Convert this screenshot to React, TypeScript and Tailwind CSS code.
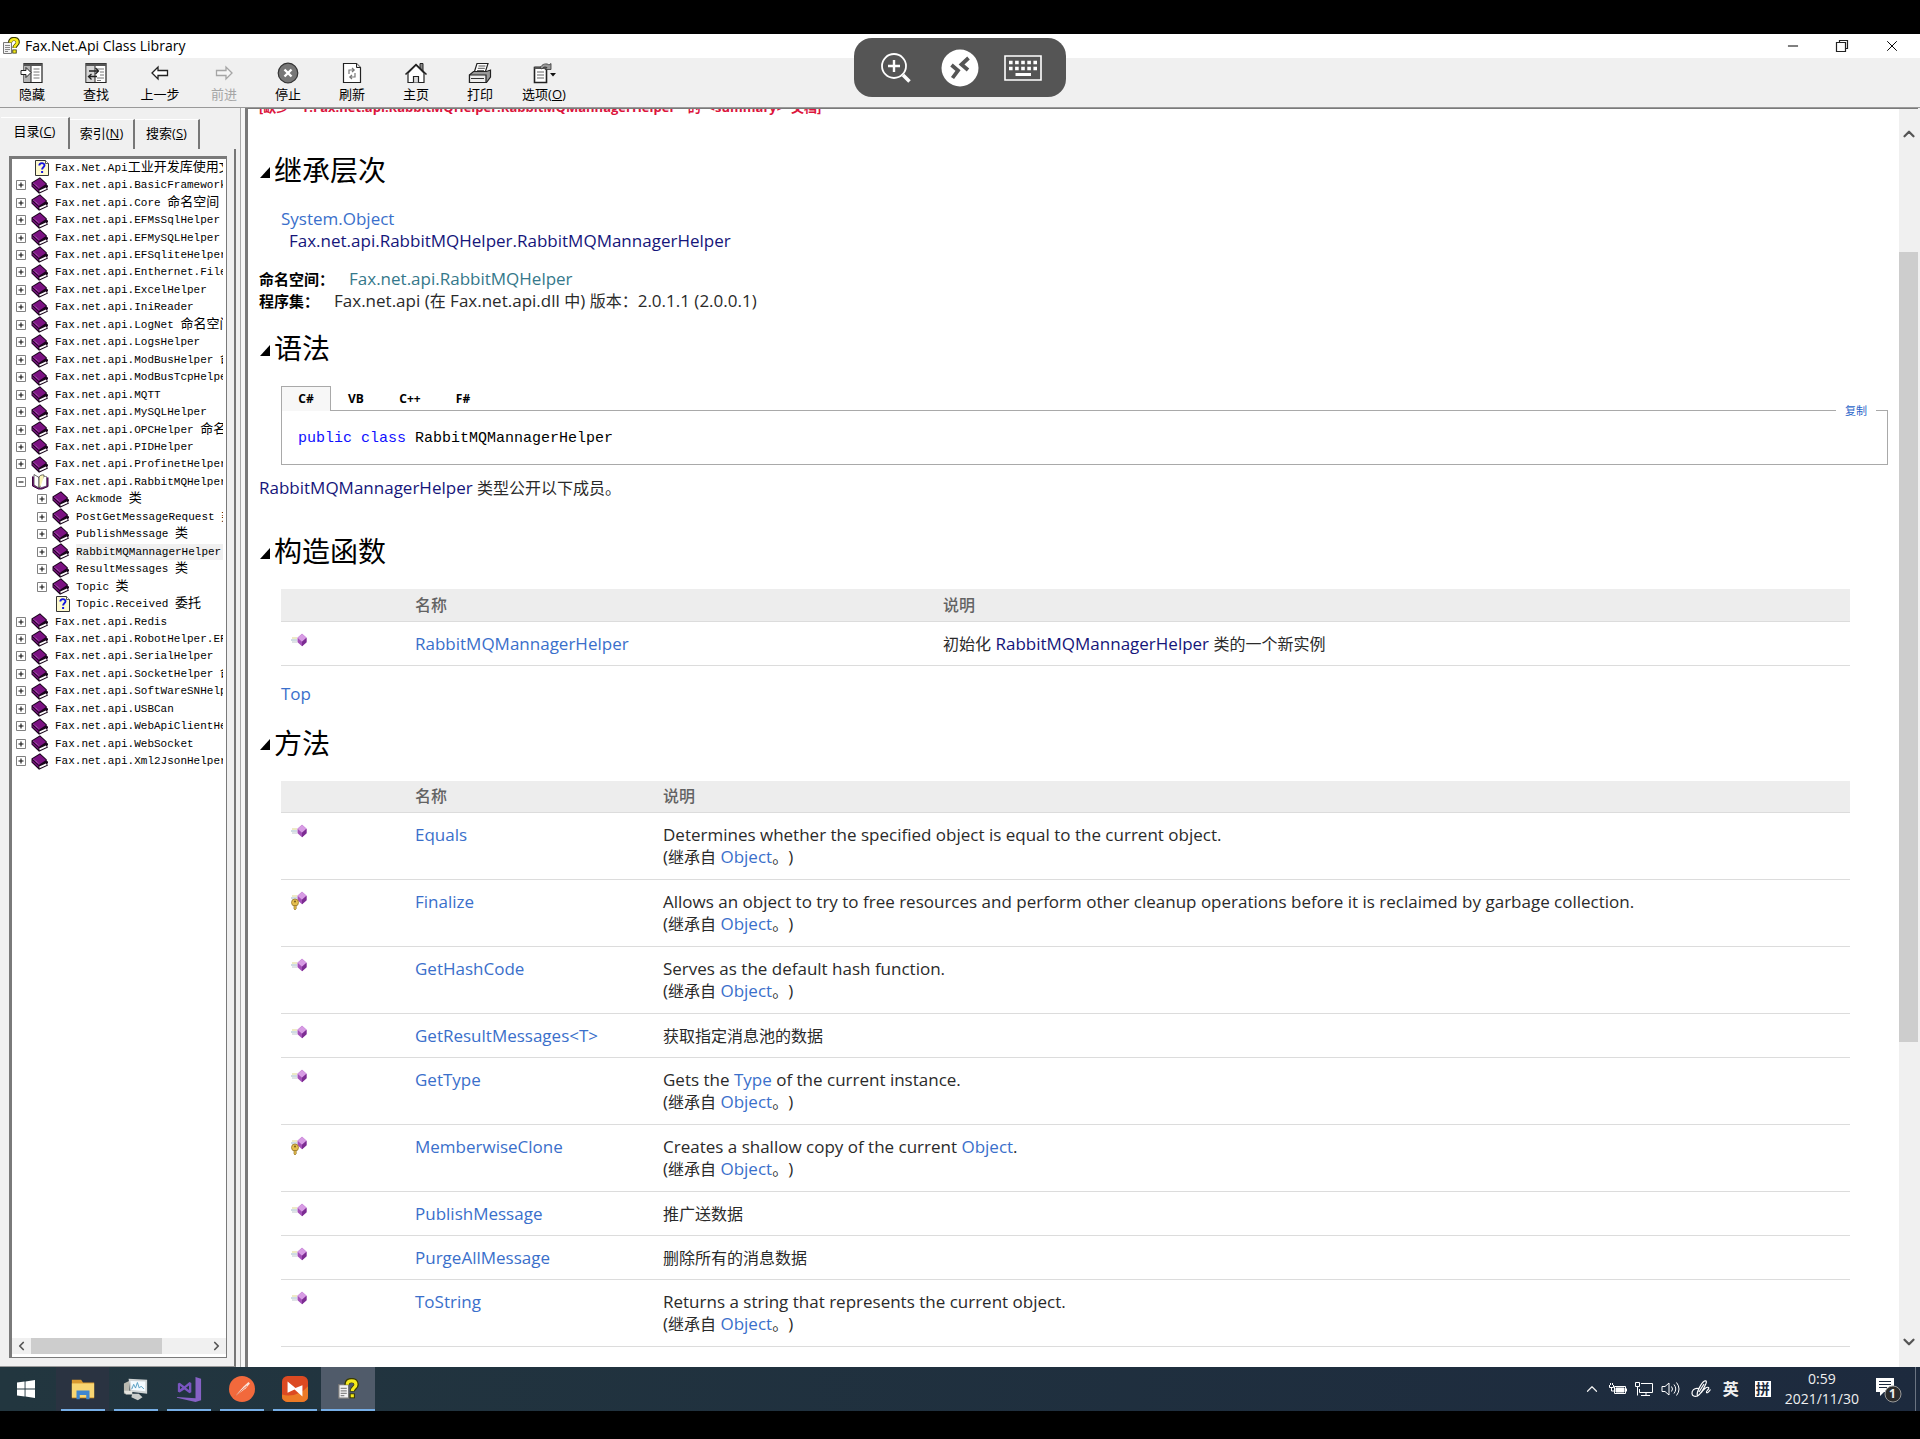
import React from "react";
import { ChevronUp, ChevronDown, ChevronLeft, ChevronRight, Minus, X } from "lucide-react";

const UI = "font-['Open_Sans','Noto_Sans_CJK_SC',sans-serif]";

type TreeItem = { label: string; kind: "book" | "open" | "page"; child?: boolean; selected?: boolean };

const tree: TreeItem[] = [
  { label: "Fax.Net.Api工业开发库使用文档", kind: "page" },
  { label: "Fax.net.api.BasicFramework", kind: "book" },
  { label: "Fax.net.api.Core 命名空间", kind: "book" },
  { label: "Fax.net.api.EFMsSqlHelper", kind: "book" },
  { label: "Fax.net.api.EFMySQLHelper", kind: "book" },
  { label: "Fax.net.api.EFSqliteHelper", kind: "book" },
  { label: "Fax.net.api.Enthernet.File", kind: "book" },
  { label: "Fax.net.api.ExcelHelper", kind: "book" },
  { label: "Fax.net.api.IniReader", kind: "book" },
  { label: "Fax.net.api.LogNet 命名空间", kind: "book" },
  { label: "Fax.net.api.LogsHelper", kind: "book" },
  { label: "Fax.net.api.ModBusHelper 命名空间", kind: "book" },
  { label: "Fax.net.api.ModBusTcpHelper", kind: "book" },
  { label: "Fax.net.api.MQTT", kind: "book" },
  { label: "Fax.net.api.MySQLHelper", kind: "book" },
  { label: "Fax.net.api.OPCHelper 命名空间", kind: "book" },
  { label: "Fax.net.api.PIDHelper", kind: "book" },
  { label: "Fax.net.api.ProfinetHelper", kind: "book" },
  { label: "Fax.net.api.RabbitMQHelper", kind: "open" },
  { label: "Ackmode 类", kind: "book", child: true },
  { label: "PostGetMessageRequest 类", kind: "book", child: true },
  { label: "PublishMessage 类", kind: "book", child: true },
  { label: "RabbitMQMannagerHelper", kind: "book", child: true, selected: true },
  { label: "ResultMessages 类", kind: "book", child: true },
  { label: "Topic 类", kind: "book", child: true },
  { label: "Topic.Received 委托", kind: "page", child: true },
  { label: "Fax.net.api.Redis", kind: "book" },
  { label: "Fax.net.api.RobotHelper.EF", kind: "book" },
  { label: "Fax.net.api.SerialHelper", kind: "book" },
  { label: "Fax.net.api.SocketHelper 命名空间", kind: "book" },
  { label: "Fax.net.api.SoftWareSNHelper", kind: "book" },
  { label: "Fax.net.api.USBCan", kind: "book" },
  { label: "Fax.net.api.WebApiClientHelper", kind: "book" },
  { label: "Fax.net.api.WebSocket", kind: "book" },
  { label: "Fax.net.api.Xml2JsonHelper", kind: "book" },
];

const Link = ({ children }: { children: React.ReactNode }) => (
  <a href="#" className="text-[#3a6fcb]">{children}</a>
);

const Cn = ({ children }: { children: React.ReactNode }) => (
  <span className="text-base leading-[22px]">{children}</span>
);

const Inherited = () => (
  <div>(<Cn>继承自</Cn> <Link>Object</Link><Cn>。</Cn>)</div>
);

const methods: { name: string; guarded?: boolean; desc: React.ReactNode; inherited?: boolean }[] = [
  { name: "Equals", desc: "Determines whether the specified object is equal to the current object.", inherited: true },
  {
    name: "Finalize",
    guarded: true,
    desc: "Allows an object to try to free resources and perform other cleanup operations before it is reclaimed by garbage collection.",
    inherited: true,
  },
  { name: "GetHashCode", desc: "Serves as the default hash function.", inherited: true },
  { name: "GetResultMessages<T>", desc: <Cn>获取指定消息池的数据</Cn> },
  { name: "GetType", desc: <>Gets the <Link>Type</Link> of the current instance.</>, inherited: true },
  { name: "MemberwiseClone", guarded: true, desc: <>Creates a shallow copy of the current <Link>Object</Link>.</>, inherited: true },
  { name: "PublishMessage", desc: <Cn>推广送数据</Cn> },
  { name: "PurgeAllMessage", desc: <Cn>删除所有的消息数据</Cn> },
  { name: "ToString", desc: "Returns a string that represents the current object.", inherited: true },
];

/* ---------- icons ---------- */

const HelpIcon = ({ className }: { className?: string }) => (
  <svg viewBox="0 0 18 18" className={className}>
    <path d="M1.500 5.500h8v11h-8z" fill="#f2f2f2" stroke="#777" />
    <path d="M3 8.500h5M3 10.500h5M3 12.500h5M3 14.500h3" stroke="#888" />
    <path d="M8 5.500C8 2.500 10 2 12 2s3.800 1 3.800 3.300c0 2.700-3.300 2.700-3.300 5.700" fill="none" stroke="#3b3b00" strokeWidth="4.200" />
    <path d="M10.300 12.600h4.400v4h-4.400z" fill="#3b3b00" />
    <path d="M8.400 5.500C8.400 3 10 2.300 12 2.300s3.500 1 3.500 3c0 2.600-3 2.600-3 5.400" fill="none" stroke="#f5ea1c" strokeWidth="2.600" />
    <path d="M11.200 13.300h2.600v2.500h-2.600z" fill="#f5ea1c" />
  </svg>
);

const BookIcon = () => (
  <svg viewBox="0 0 18 17" className="h-[17px] w-[18px] shrink-0">
    <path d="M.5 5.500 9 .3l6.800 6.200v1.400l1.200.6v1.800l-1 .4 1 1.700-9 4.300L.5 9.500z" fill="#1a061c" />
    <path d="m8.600 15.200 7.200-3.300-.9-1.500-6.600 3.200z" fill="#fff" />
    <path d="m1.500 5.900 7.400-4.500 6.100 5.500-7.300 5.200z" fill="#7b1282" />
    <path d="m2.500 6.300 5.700 4.600" stroke="#c98acd" strokeWidth=".8" strokeDasharray="1 .7" />
    <path d="m1.300 7.300 6.200 5.500v1.600L1.300 9z" fill="#7b1282" />
  </svg>
);

const OpenBookIcon = () => (
  <svg viewBox="0 0 18 17" className="h-[17px] w-[18px] shrink-0">
    <path d="M1.500 3.500V13l6 3h3.500l6-2.500v-9" fill="#7b1282" stroke="#3a0a3d" />
    <path d="M3 1.500 8 4.500v10.500l-5-3z" fill="#fff" stroke="#444" strokeWidth=".8" />
    <path d="M8 4.500c.5-2 2.500-3 5-2.500v10.500c-2.500 0-4 .5-5 2.500z" fill="#fbf6b8" stroke="#444" strokeWidth=".8" />
    <path d="M13 3.500h2.500V13L9 15" fill="#fff" stroke="#444" strokeWidth=".6" />
  </svg>
);

const PageIcon = () => (
  <svg viewBox="0 0 14 16" className="h-4 w-[14px] shrink-0">
    <path d="M.5.5h10l3 3v12H.5z" fill="#fdf9cf" stroke="#333" />
    <path d="M10.500.5v3h3" fill="#fff" stroke="#333" strokeWidth=".8" />
    <path d="M4.300 5.600c0-3.200 5.200-3.200 5.200-.3 0 1.900-2.400 1.900-2.400 4.200" fill="none" stroke="#1414e0" strokeWidth="1.900" />
    <path d="M6.100 11h2v2h-2z" fill="#1414e0" />
  </svg>
);

const ExpandBox = ({ open }: { open: boolean }) => (
  <svg viewBox="0 0 10 10" className="h-[10px] w-[10px] shrink-0">
    <path d="M.5.5h9v9h-9z" fill="#fff" stroke="#808080" />
    <path d={open ? "M2.500 5h5" : "M2.500 5h5M5 2.500v5"} stroke="#111" strokeWidth="1.100" />
  </svg>
);

const MethodIcon = ({ guarded }: { guarded?: boolean }) => (
  <svg viewBox="0 0 20 22" className="ml-2 h-[22px] w-5">
    <path d="M3 5h5" stroke="#dcd78c" />
    <path d="M2 7h6" stroke="#9fb8c8" />
    <path d="M3 9h5" stroke="#c0c8ce" />
    <path d="m13 .8 4.500 4v4.500l-4.500 4-4.500-4V4.800z" fill="#a34fb8" />
    <path d="m13 .8 4.500 4-4.500 4-4.500-4z" fill="#d79be4" />
    <path d="m17.500 4.800-4.500 4v4.500l4.500-4z" fill="#7c2d92" />
    {guarded && (
      <g>
        <circle cx="6" cy="11.500" r="3.500" fill="#e5bf4d" stroke="#98762a" strokeWidth=".8" />
        <path d="M5 14.500h2.200v3.300L6 19l-1-1z" fill="#e5bf4d" stroke="#98762a" strokeWidth=".7" />
        <circle cx="6" cy="10.500" r="1" fill="#7b5c18" />
      </g>
    )}
  </svg>
);

const toolbar: { label: React.ReactNode; key: string; disabled?: boolean; icon: React.ReactNode }[] = [
  {
    key: "hide",
    label: "隐藏",
    icon: (
      <>
        <path d="M4 1.500h18v19H4z" fill="#fff" stroke="#222" strokeWidth="1.200" />
        <path d="M4 1.500h18v2.500H4z" fill="#555" />
        <path d="M4 4h7v16H4z" fill="#b5b5b5" />
        <path d="M11 4v16.500" stroke="#222" />
        <path d="M13.500 7h6M13.500 10h6M13.500 13h6M13.500 16h6" stroke="#777" />
        <path d="M1 8.500h5v-3l5 5-5 5v-3H1z" fill="#fff" stroke="#222" />
      </>
    ),
  },
  {
    key: "find",
    label: "查找",
    icon: (
      <>
        <path d="M2 1.500h20v19H2z" fill="#fff" stroke="#222" strokeWidth="1.200" />
        <path d="M2 1.500h20v2.500H2z" fill="#555" />
        <path d="M2.600 4H11v16H2.600z" fill="#d5d5d5" />
        <path d="M11 4v16" stroke="#222" />
        <path d="M13 7h7M16 10h4M16 13h4M13 16h7M13 18.500h4" stroke="#777" />
        <path d="M5 9h9M11.500 6l3 3-3 3M13 14.500H5M7.500 12l-3 2.500 3 3" stroke="#222" strokeWidth="1.300" fill="none" />
      </>
    ),
  },
  {
    key: "back",
    label: "上一步",
    icon: <path d="M4 11l6-6v3.500h9.500v5H10V17z" fill="#fff" stroke="#222" strokeWidth="1.300" />,
  },
  {
    key: "forward",
    label: "前进",
    disabled: true,
    icon: <path d="M20 11l-6-6v3.500H4.500v5H14V17z" fill="#f5f5f5" stroke="#a5a5a5" strokeWidth="1.300" />,
  },
  {
    key: "stop",
    label: "停止",
    icon: (
      <>
        <circle cx="12" cy="11" r="9.800" fill="#777" stroke="#333" strokeWidth="1.200" />
        <path d="m8.500 7.500 7 7m0-7-7 7" stroke="#fff" strokeWidth="2.400" />
      </>
    ),
  },
  {
    key: "refresh",
    label: "刷新",
    icon: (
      <>
        <path d="M3.500 1.500h13l4 4v15h-17z" fill="#fff" stroke="#222" strokeWidth="1.200" />
        <path d="M16.500 1.500v4h4" fill="#ddd" stroke="#222" />
        <path d="M9 12V8h5M12 6l2.200 2L12 10M15 11v4h-5M12 13l-2.200 2 2.200 2" stroke="#777" strokeWidth="1.200" fill="none" />
      </>
    ),
  },
  {
    key: "home",
    label: "主页",
    icon: (
      <>
        <path d="M16 7V1.500h3V10" fill="#888" stroke="#222" />
        <path d="M4 11v9.500h16V11l-8-8z" fill="#fff" stroke="#222" strokeWidth="1.200" />
        <path d="m1.500 12.500 10.500-10 10.500 10" fill="none" stroke="#222" strokeWidth="1.600" />
        <path d="M9.500 20.500v-6h5v6" fill="#ddd" stroke="#222" strokeWidth="1.200" />
      </>
    ),
  },
  {
    key: "print",
    label: "打印",
    icon: (
      <>
        <path d="M6 11 9 1.500h11L17 11z" fill="#fff" stroke="#222" strokeWidth="1.200" />
        <path d="M10.500 4h7M9.800 6.300h7M9 8.600h7" stroke="#555" />
        <path d="m1.500 13 4-3.500h13l4-1.500v7l-4 5.500h-17z" fill="#999" stroke="#222" strokeWidth="1.200" />
        <path d="M1.500 13h16.500v7.500H1.500z" fill="#eee" stroke="#222" strokeWidth="1.200" />
        <path d="M3 16.500h13" stroke="#333" />
      </>
    ),
  },
  {
    key: "options",
    label: <>选项(<u>O</u>)</>,
    icon: (
      <>
        <path d="M2.500 5.500h12v15h-12z" fill="#fff" stroke="#222" strokeWidth="1.600" />
        <path d="M2.500 4.500h12v2.500h-12z" fill="#555" />
        <path d="M5 10h7M5 13h7M5 16h7" stroke="#666" strokeWidth="1.200" />
        <path d="M8 6c2-4.500 7-5 9-3l2-1.500v6h-6l2-2c-2-1-4-.5-5 1.500z" fill="#999" stroke="#333" strokeWidth=".8" />
        <path d="M18 11h6l-3 3.500z" fill="#111" />
      </>
    ),
  },
];

const taskIcons: { name: string; slot: string; icon: React.ReactNode }[] = [
  {
    name: "File Explorer",
    slot: "bg-[#2a3341]",
    icon: (
      <>
        <path d="M2 4h10l2 3h12v17H2z" fill="#d9992f" />
        <path d="M2 8h24v15H2z" fill="#f8d672" />
        <path d="M7 15.500h14V25h-3.500v-4.500h-7V25H7z" fill="#3e86d0" />
      </>
    ),
  },
  {
    name: "Performance",
    slot: "",
    icon: (
      <>
        <path d="M1 8l6-3v13l-6 1z" fill="#b9b9b0" />
        <path d="M6 3l20 1v15L8 17z" fill="#cfd3d4" />
        <path d="M8 5.500l16 .5v10.500L9.500 15z" fill="#f4fbff" />
        <path d="M9.500 14l2-5 2 4 2-6 2 6 2-2 3 3" fill="none" stroke="#4f9ac0" />
        <path d="M10 19h7l4 4-5 3-7-3z" fill="#c9ccca" />
        <path d="M1 16h9v4H3z" fill="#e3e3dd" />
      </>
    ),
  },
  {
    name: "Visual Studio",
    slot: "",
    icon: (
      <>
        <path d="M21 1l6 2v23l-6 2L1 23.500v-1L21 24z" fill="#8661c5" />
        <path d="M2 8l2-.8 5 3.800 5.500-4.500 2 1v10l-2 1L9 14.500l-5 3.300-2-.8zm2.300 2.800v3.500L6.800 12.500zm9.700-.5-3.300 2.400 3.300 2.400z" fill="#7a55c0" />
      </>
    ),
  },
  {
    name: "Postman",
    slot: "",
    icon: (
      <>
        <circle cx="14" cy="14" r="14" fill="#f2693c" />
        <path d="M6 22 16 11l5-4.500 1.500 1.500L18 13.500z" fill="#fbe5dc" />
        <path d="m6 22 13.500-11.500" stroke="#d9542b" strokeWidth=".8" />
      </>
    ),
  },
  {
    name: "Remote",
    slot: "",
    icon: (
      <>
        <rect width="28" height="28" rx="6" fill="#dc4a22" />
        <path d="M0 20c10 3 21-1 28-9v11a6 6 0 0 1-6 6H6a6 6 0 0 1-6-6z" fill="#ec7a26" />
        <path d="M6 6v12l7.500-3.500L22 22V10l-7.500 3z" fill="#fff" />
      </>
    ),
  },
];

/* ---------- parts ---------- */

const TreeLabel = ({ text }: { text: string }) => (
  <>
    {text.split(/([\u4e00-\u9fff]+)/).map((part, i) =>
      i % 2 ? <span key={i} className="text-[13px]">{part}</span> : part
    )}
  </>
);

const TreeRow = ({ item }: { item: TreeItem }) => (
  <li className={item.child ? "flex flex-1 items-center pl-[25px]" : "flex flex-1 items-center pl-1"}>
    {item.kind === "page" ? <span className="w-[10px] shrink-0" /> : <ExpandBox open={item.kind === "open"} />}
    <span className="mr-px flex w-[28px] shrink-0 items-center justify-center">
      {item.kind === "page" ? <span className="pl-1"><PageIcon /></span> : item.kind === "open" ? <OpenBookIcon /> : <BookIcon />}
    </span>
    <a href="#" className={item.selected ? "flex-1 bg-[#f0f0f0] leading-4" : "leading-4"}>
      <TreeLabel text={item.label} />
    </a>
  </li>
);

const Sidebar = () => (
  <aside className="flex w-[236px] shrink-0 flex-col pt-[9px]">
    <div className="flex h-8 items-end pl-px text-[13px]">
      <button className="flex h-8 w-[69px] items-center justify-center border-t border-r-2 border-t-white border-r-[#777] pb-1">
        目录(<u>C</u>)
      </button>
      <button className="flex h-[30px] w-[65px] items-center justify-center border-t border-r-2 border-t-white border-r-[#777] pb-0.5">
        索引(<u>N</u>)
      </button>
      <button className="flex h-[30px] w-[65px] items-center justify-center border-t border-r-2 border-t-white border-r-[#777] pb-0.5">
        搜索(<u>S</u>)
      </button>
    </div>
    <div className="flex min-h-0 flex-1 flex-col border-r-2 border-b border-r-[#777] border-b-[#999] pt-[7px] pr-[7px] pb-2 pl-[9px]">
      <div className="flex min-h-0 flex-1 flex-col overflow-hidden border-t-[3px] border-r border-b border-l-[3px] border-[#7a7a7a] bg-white">
        <div className="min-h-0 flex-1 overflow-hidden pr-[3px]">
          <ul className="flex h-[611px] flex-col overflow-hidden font-['Liberation_Mono','Noto_Sans_CJK_SC',monospace] text-[11px] whitespace-nowrap text-black">
            {tree.map((item) => (
              <TreeRow key={item.label} item={item} />
            ))}
          </ul>
        </div>
        <div className="mb-[3px] flex h-4 items-center bg-[#f0f0f0]">
          <ChevronLeft className="w-[19px] text-[#555]" size={14} strokeWidth={3} />
          <div className="h-4 w-[131px] bg-[#cdcdcd]" />
          <ChevronRight className="ml-auto w-[19px] text-[#555]" size={14} strokeWidth={3} />
        </div>
      </div>
    </div>
  </aside>
);

const Heading = ({ children }: { children: React.ReactNode }) => (
  <h2 className="mb-[18px] flex h-10 items-center text-[28px] leading-10 text-black">
    <svg viewBox="0 0 10 11" className="mx-px mt-1 h-[11px] w-[10px]">
      <path d="M10 0v11H0z" fill="#000" />
    </svg>
    <span className="pl-[3px]">{children}</span>
  </h2>
);

const MemberTable = ({ nameWidth, children }: { nameWidth: string; children: React.ReactNode }) => (
  <div className="pr-[38px] pl-[22px]">
    <table className="w-full table-fixed border-collapse text-left">
      <thead>
        <tr className="h-8 border-b border-[#dcdcdc] bg-[#ededed] text-base leading-[22px] text-[#636363]">
          <th className="w-[134px]" aria-label="图标" />
          <th className={`${nameWidth} font-medium`}>名称</th>
          <th className="font-medium">说明</th>
        </tr>
      </thead>
      <tbody>{children}</tbody>
    </table>
  </div>
);

const Content = () => (
  <main className={`min-w-0 flex-1 overflow-hidden bg-white pr-[11px] pl-[11px] text-[17px] leading-[22px] text-[#2a2a2a] [text-spacing-trim:space-all] ${UI}`}>
    <p className="-mt-[10px] mb-[35px] h-4 text-[13px] leading-4 font-bold whitespace-nowrap text-[#dc143c]">
      [缺少 &nbsp;“T:Fax.net.api.RabbitMQHelper.RabbitMQMannagerHelper” &nbsp;的 &nbsp;&lt;summary&gt; &nbsp;文档]
    </p>
    <Heading>继承层次</Heading>
    <div className="mb-4 pl-[22px]">
      <div><Link>System.Object</Link></div>
      <div className="pl-2 text-[#15157a]">Fax.net.api.RabbitMQHelper.RabbitMQMannagerHelper</div>
    </div>
    <div className="mb-4">
      <div>
        <b className="mr-[15px] text-[15px] leading-[22px] text-black">命名空间：</b>
        <a href="#" className="text-[#35788a]">Fax.net.api.RabbitMQHelper</a>
      </div>
      <div>
        <b className="mr-[15px] text-[15px] leading-[22px] text-black">程序集：</b>
        Fax.net.api (<Cn>在</Cn> Fax.net.api.dll <Cn>中</Cn>) <Cn>版本：</Cn>2.0.1.1 (2.0.0.1)
      </div>
    </div>
    <Heading>语法</Heading>
    <div className="mb-3 pl-[22px]">
      <div className="relative z-10 -mb-px flex h-[25px] text-xs font-bold text-black">
        <button className="w-[50px] border border-b-0 border-[#a9a9a9] bg-[#f7f7f7]">C#</button>
        <button className="w-[50px]">VB</button>
        <button className="w-[58px]">C++</button>
        <button className="w-[48px]">F#</button>
      </div>
      <div className="relative border border-[#a9a9a9] px-4 pt-[17px] pb-[14px]">
        <button className="absolute -top-2 right-[11px] w-10 bg-white text-[11px] leading-4 text-[#2a66c9]">复制</button>
        <pre className="font-['Liberation_Mono',monospace] text-[15px] leading-[22px] text-black">
          <span className="text-[#1010ff]">public</span> <span className="text-[#1010ff]">class</span> RabbitMQMannagerHelper
        </pre>
      </div>
    </div>
    <p className="mb-8">
      <span className="text-[#15157a]">RabbitMQMannagerHelper</span> <Cn>类型公开以下成员。</Cn>
    </p>
    <Heading>构造函数</Heading>
    <MemberTable nameWidth="w-[528px]">
      <tr className="h-11 border-b border-[#dcdcdc] align-top">
        <td className="pt-[11px]"><MethodIcon /></td>
        <td className="pt-[11px]"><Link>RabbitMQMannagerHelper</Link></td>
        <td className="pt-[11px]">
          <Cn>初始化</Cn> <span className="text-[#15157a]">RabbitMQMannagerHelper</span> <Cn>类的一个新实例</Cn>
        </td>
      </tr>
    </MemberTable>
    <p className="mt-[17px] mb-[18px] pl-[22px]"><Link>Top</Link></p>
    <Heading>方法</Heading>
    <MemberTable nameWidth="w-[248px]">
      {methods.map((m) => (
        <tr
          key={m.name}
          className={m.inherited ? "h-[67px] border-b border-[#dcdcdc] align-top" : "h-11 border-b border-[#dcdcdc] align-top"}
        >
          <td className="pt-[11px]"><MethodIcon guarded={m.guarded} /></td>
          <td className="pt-[11px]"><Link>{m.name}</Link></td>
          <td className="pt-[11px]">
            {m.desc}
            {m.inherited && <Inherited />}
          </td>
        </tr>
      ))}
    </MemberTable>
  </main>
);

const RemotePill = () => (
  <div className="absolute top-[38px] left-1/2 z-20 flex h-[59px] w-[212px] -translate-x-1/2 items-center justify-between rounded-[18px] bg-[#555] px-6">
    <button aria-label="Zoom" className="pl-0.5">
      <svg viewBox="0 0 32 32" className="h-8 w-8" fill="none" stroke="#fff">
        <circle cx="14" cy="14" r="12" strokeWidth="1.800" />
        <path d="M14 8v12M8 14h12" strokeWidth="2.400" />
        <path d="m23 23 6.500 6.500" strokeWidth="3.600" />
      </svg>
    </button>
    <button aria-label="Connections" className="pl-1">
      <svg viewBox="0 0 38 38" className="h-[38px] w-[38px]">
        <circle cx="19" cy="19" r="18.500" fill="#fff" />
        <path d="m10.500 16 6.500 5.500-5.500 7.500M27.500 9 20.500 15.500l6.500 5.500" fill="none" stroke="#555" strokeWidth="3.800" />
      </svg>
    </button>
    <button aria-label="Keyboard">
      <svg viewBox="0 0 38 26" className="h-[26px] w-[38px]">
        <path d="M1 1h36v24H1z" fill="none" stroke="#fff" strokeWidth="1.600" />
        <path d="M5 7.500h28M5 13.500h28" stroke="#fff" strokeWidth="3.600" strokeDasharray="3.600 2.500" />
        <path d="M11.500 19.500h15.500" stroke="#fff" strokeWidth="3" />
      </svg>
    </button>
  </div>
);

const Taskbar = () => (
  <footer className={`flex h-11 shrink-0 items-stretch bg-linear-to-r from-[#22363f] to-[#1d2a3e] text-[#f0f0f0] ${UI}`}>
    <button aria-label="Start" className="flex w-14 items-center justify-center pr-1">
      <svg viewBox="0 0 18 18" className="h-[18px] w-[18px]" fill="#fff">
        <path d="M0 2.600 7.600 1.500v7H0zM8.500 1.400 18 0v8.500H8.500zM0 9.500h7.600v7L0 15.400zM8.500 9.500H18V18l-9.500-1.400z" />
      </svg>
    </button>
    {taskIcons.map((t) => (
      <button key={t.name} aria-label={t.name} className={`flex w-[53px] flex-col items-center justify-end ${t.slot}`}>
        <svg viewBox="0 0 28 28" className="mb-[7px] h-[26px] w-[26px]">{t.icon}</svg>
        <span className="h-0.5 w-11 bg-[#76aee6]" />
      </button>
    ))}
    <button aria-label="Fax.Net.Api Class Library" className="flex w-[54px] flex-col items-center justify-end bg-[#505b6a]">
      <HelpIcon className="mb-[9px] h-[22px] w-[22px]" />
      <span className="h-0.5 w-full bg-[#76aee6]" />
    </button>
    <div className="ml-auto flex items-center">
      <ChevronUp size={18} strokeWidth={1.600} className="mr-2" />
      <svg viewBox="0 0 18 14" className="mr-2 h-[14px] w-[18px]" fill="none" stroke="#fff">
        <path d="M5.500 4.500h11v7h-11z" />
        <path d="M7 6h8v4H7z" fill="#fff" />
        <path d="M17.500 6.500v3M.5 3v2.500h4V3M1.500 1v2M3.500 1v2M2.500 5.500V9h3" />
      </svg>
      <svg viewBox="0 0 18 16" className="mr-2 h-4 w-[18px]" fill="none" stroke="#fff">
        <path d="M6 2.500h11.500v9H4.500V8M11 11.500v3M6 14.500h9M.5 1.500h4v4h-4zM2.500 5.500v9" />
      </svg>
      <svg viewBox="0 0 20 16" className="mr-[10px] h-4 w-5" fill="none" stroke="#fff">
        <path d="M1 5.500h3L8 2v12l-4-3.500H1zM10.500 5.500q2 2.500 0 5M13 3.500q3.500 4.500 0 9M15.500 1.500q5 6.500 0 13" />
      </svg>
      <svg viewBox="0 0 20 20" className="mr-3 h-5 w-5" fill="none" stroke="#fff" strokeWidth="1.200">
        <path d="M6.500 17C5 14 10 4 13.500 2c2-.8 2.300 1 1.300 3-2 4.500-5 10-8.300 12zM7.500 9.500C3 8.500.8 12 1 14.500s2.500 3.500 5.500 2.500M10 14c2-3.500 6-6.500 7.500-5.500s-3 4-2 5 2.500-1 4-3M8 13l5-8" />
      </svg>
      <span className="mr-4 text-base font-bold">英</span>
      <span className="flex h-4 w-4 items-center justify-center bg-white text-sm leading-4 font-bold text-[#1d2a3e]">拼</span>
      <div className="ml-[14px] text-center text-sm leading-5">
        <div>0:59</div>
        <div>2021/11/30</div>
      </div>
      <button aria-label="Notifications" className="relative mr-3 ml-4 h-7 w-7">
        <svg viewBox="0 0 28 28" className="h-7 w-7">
          <path d="M1 3h18v14H9l-4 4v-4H1z" fill="#fff" />
          <path d="M4 6.500h12M4 9.500h12M4 12.500h8" stroke="#1d2a3e" />
          <circle cx="18" cy="19" r="8" fill="#2b2b2b" stroke="#999" />
        </svg>
        <span className="absolute top-[11px] left-[14px] text-xs leading-4 font-bold">1</span>
      </button>
      <span className="mr-1 h-11 w-px bg-[#6b7482]" />
    </div>
  </footer>
);

const App = () => {
  return (
    <div className={`relative flex h-screen flex-col bg-black pt-[34px] pb-7 text-black ${UI}`}>
      <RemotePill />
      <header className="flex h-6 shrink-0 items-center bg-white pl-[2px] text-sm">
        <HelpIcon className="mr-[5px] h-[18px] w-[18px]" />
        <h1>Fax.Net.Api Class Library</h1>
        <div className="ml-auto flex pr-[19px]">
          <button aria-label="Minimize" className="mr-[33px]"><Minus size={16} strokeWidth={1.500} /></button>
          <button aria-label="Restore" className="mr-[33px]">
            <svg viewBox="0 0 16 16" className="h-4 w-4" fill="none" stroke="#222">
              <path d="M5.500 4.500v-2h8v8h-2M2.500 4.500h9v9h-9z" strokeWidth="1.200" />
            </svg>
          </button>
          <button aria-label="Close"><X size={18} strokeWidth={1.300} /></button>
        </div>
      </header>
      <nav className="flex h-[49px] shrink-0 bg-[#f0f0f0] pt-1 text-[13px]">
        {toolbar.map((t) => (
          <button
            key={t.key}
            disabled={t.disabled}
            className={t.disabled ? "flex w-16 flex-col items-center text-[#a5a5a5]" : "flex w-16 flex-col items-center"}
          >
            <svg viewBox="0 0 24 22" className="mb-0.5 h-[22px] w-6" fill="none">{t.icon}</svg>
            <span className="leading-4">{t.label}</span>
          </button>
        ))}
      </nav>
      <div className="flex min-h-0 flex-1 border-t border-[#999] bg-[#f0f0f0]">
        <Sidebar />
        <div className="ml-1 w-[5px] shrink-0 border-l border-[#aaa] bg-[#f7f7f7]" />
        <div className="mr-[2px] flex min-w-0 flex-1 border-t border-l-[3px] border-[#7a7a7a]">
          <Content />
          <div className="flex w-[19px] shrink-0 flex-col items-center bg-[#f0f0f0] py-4">
            <ChevronUp size={18} strokeWidth={3} className="text-[#555]" />
            <div className="flex w-full flex-1 flex-col pt-[109px] pb-[291px]">
              <div className="flex-1 bg-[#cdcdcd]" />
            </div>
            <ChevronDown size={18} strokeWidth={3} className="text-[#555]" />
          </div>
        </div>
      </div>
      <Taskbar />
    </div>
  );
};

export default App;
